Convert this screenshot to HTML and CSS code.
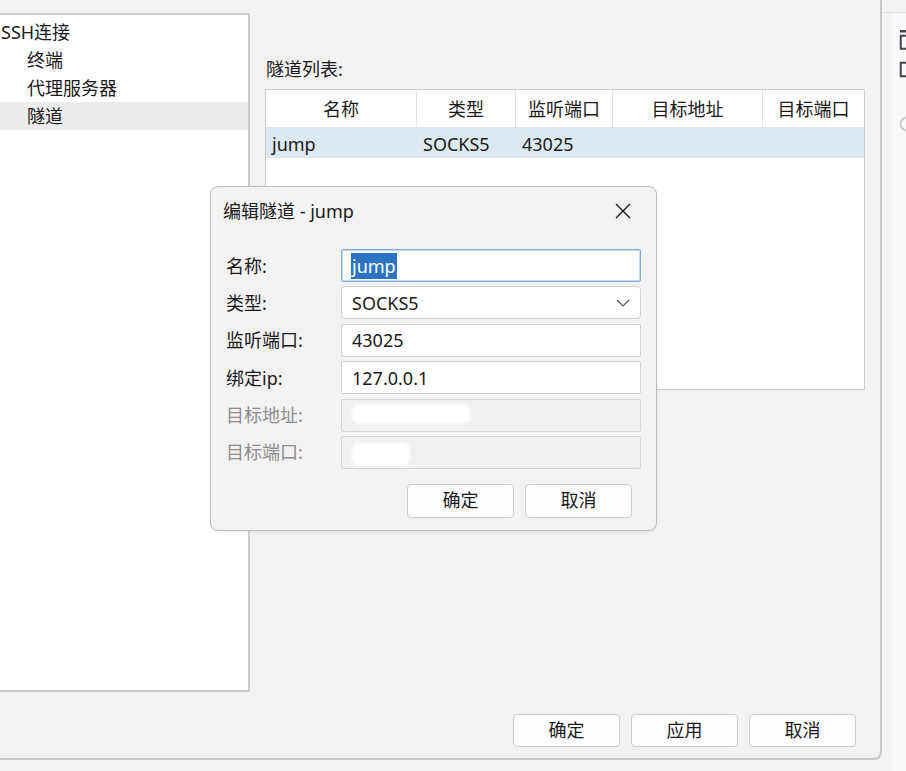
FILE: index.html
```html
<!DOCTYPE html>
<html lang="zh-CN">
<head>
<meta charset="utf-8">
<title>SSH连接 - 隧道</title>
<link rel="stylesheet" href="styles.css">
</head>
<body>
<div class="screen">
  <div class="window">
    <div class="main">
      <div class="tree">
        <div class="tree-item root">SSH连接</div>
        <div class="tree-item child">终端</div>
        <div class="tree-item child">代理服务器</div>
        <div class="tree-item child selected">隧道</div>
      </div>
      <div class="content">
        <div class="list-label">隧道列表:</div>
        <div class="table">
          <div class="thead">
            <div class="th">名称</div>
            <div class="th">类型</div>
            <div class="th">监听端口</div>
            <div class="th">目标地址</div>
            <div class="th last">目标端口</div>
          </div>
          <div class="trow selected">
            <div class="td">jump</div>
            <div class="td">SOCKS5</div>
            <div class="td">43025</div>
            <div class="td"></div>
            <div class="td"></div>
          </div>
        </div>
      </div>
    </div>
    <div class="footer">
      <button class="btn">确定</button>
      <button class="btn">应用</button>
      <button class="btn">取消</button>
    </div>

    <div class="dialog">
      <div class="dlg-title">
        <span class="dlg-title-text">编辑隧道 - jump</span>
        <span class="dlg-close">
          <svg width="16" height="16" viewBox="0 0 16 16"><path d="M1 1 L15 15 M15 1 L1 15" stroke="#1a1a1a" stroke-width="1.4" fill="none"/></svg>
        </span>
      </div>
      <div class="form">
        <div class="frow">
          <label class="flabel">名称:</label>
          <div class="field focused"><span class="sel">jump</span></div>
        </div>
        <div class="frow">
          <label class="flabel">类型:</label>
          <div class="field combo">
            <span>SOCKS5</span>
            <svg class="chev" width="14" height="8" viewBox="0 0 14 8"><path d="M1 1 L7 7 L13 1" stroke="#555" stroke-width="1.1" fill="none"/></svg>
          </div>
        </div>
        <div class="frow">
          <label class="flabel">监听端口:</label>
          <div class="field">43025</div>
        </div>
        <div class="frow">
          <label class="flabel">绑定ip:</label>
          <div class="field">127.0.0.1</div>
        </div>
        <div class="frow">
          <label class="flabel disabled">目标地址:</label>
          <div class="field off"><span class="blot blot-wide"></span></div>
        </div>
        <div class="frow">
          <label class="flabel disabled">目标端口:</label>
          <div class="field off"><span class="blot blot-short"></span></div>
        </div>
      </div>
      <div class="dlg-buttons">
        <button class="btn">确定</button>
        <button class="btn">取消</button>
      </div>
    </div>
  </div>

  <div class="side">
    <div class="side-panel">
      <div class="side-icons">
        <svg class="side-icon" width="16" height="21" viewBox="0 0 16 21"><rect x="1" y="1" width="14" height="2.5" fill="#45454f"/><rect x="1.75" y="6.75" width="12.5" height="13" fill="none" stroke="#45454f" stroke-width="2"/></svg>
        <svg class="side-icon" width="16" height="17" viewBox="0 0 16 17"><rect x="1.75" y="1.75" width="12.5" height="13.5" fill="none" stroke="#45454f" stroke-width="2"/></svg>
        <svg class="side-icon faint" width="16" height="16" viewBox="0 0 16 16"><circle cx="8" cy="8" r="6.5" fill="none" stroke="#cfcfcf" stroke-width="2.2"/></svg>
      </div>
    </div>
  </div>
</div>
</body>
</html>
```

FILE: styles.css
```css
* {
  box-sizing: border-box;
}

html, body {
  margin: 0;
  padding: 0;
}

body {
  background: #f3f3f3;
  font-family: "Noto Sans", "Noto Sans CJK SC", sans-serif;
  font-size: 18px;
  color: #1a1a1a;
  width: 906px;
  height: 771px;
  overflow: hidden;
}

.screen {
  display: flex;
  width: 906px;
  height: 771px;
}

/* main window */
.window {
  position: relative;
  width: 882px;
  height: 760px;
  flex: none;
  background: #f2f2f2;
  border-right: 2px solid #c6c6c6;
  border-bottom: 2px solid #c6c6c6;
  border-bottom-right-radius: 8px;
  display: flex;
  flex-direction: column;
}

.main {
  display: flex;
  height: 692px;
  flex: none;
}

/* tree */
.tree {
  width: 250px;
  height: 679px;
  margin-top: 13px;
  background: #fff;
  border-top: 2px solid #cdcdcd;
  border-right: 2px solid #cdcdcd;
  border-bottom: 2px solid #c8c8c8;
  padding-top: 3px;
}

.tree-item {
  height: 28px;
  line-height: 28px;
  white-space: nowrap;
}

.tree-item.root {
  padding-left: 1px;
}

.tree-item.child {
  padding-left: 27px;
}

.tree-item.selected {
  background: #ebebeb;
}

/* content */
.content {
  padding-left: 15px;
  padding-top: 56px;
}

.list-label {
  line-height: 26px;
  height: 26px;
  margin-bottom: 7px;
  padding-left: 1px;
}

.table {
  width: 600px;
  height: 301px;
  background: #fff;
  border: 1px solid #cbcbcb;
}

.thead,
.trow {
  display: grid;
  grid-template-columns: 151px 99px 97px 150px 1fr;
}

.thead {
  height: 38px;
  border-bottom: 1px solid #e3e3e3;
}

.th {
  text-align: center;
  line-height: 38px;
  border-right: 1px solid #e3e3e3;
  white-space: nowrap;
}

.th.last {
  border-right: none;
}

.trow {
  height: 30px;
}

.trow.selected {
  background: #dde8f1;
}

.td {
  line-height: 32px;
  padding-left: 6px;
  white-space: nowrap;
}

/* footer */
.footer {
  display: flex;
  justify-content: flex-end;
  gap: 11px;
  padding-top: 22px;
  padding-right: 24px;
}

.btn {
  width: 107px;
  height: 33px;
  padding: 0;
  background: #fdfdfd;
  border: 1px solid #cccccc;
  border-radius: 4px;
  font-family: inherit;
  font-size: 18px;
  color: #1a1a1a;
  line-height: 31px;
}

/* dialog */
.dialog {
  position: absolute;
  left: 210px;
  top: 186px;
  width: 447px;
  height: 345px;
  background: #f2f2f2;
  border: 1px solid #bdbdbd;
  border-radius: 8px;
  box-shadow: 0 1px 3px rgba(0, 0, 0, 0.08);
  display: flex;
  flex-direction: column;
}

.dlg-title {
  height: 48px;
  display: flex;
  align-items: center;
  justify-content: space-between;
  padding-left: 12px;
  padding-right: 25px;
  padding-bottom: 1px;
}

.dlg-title-text {
  line-height: 24px;
}

.dlg-close {
  display: flex;
  width: 16px;
  height: 16px;
}

.form {
  padding-top: 14px;
  padding-left: 15px;
  display: flex;
  flex-direction: column;
  gap: 4.4px;
}

.frow {
  display: flex;
  align-items: center;
  height: 33px;
}

.flabel {
  width: 115px;
  flex: none;
  line-height: 24px;
  white-space: nowrap;
}

.flabel.disabled {
  color: #8d8d8d;
}

.field {
  width: 300px;
  height: 33px;
  background: #fff;
  border: 1px solid #d0d0d0;
  border-radius: 2px;
  padding-left: 10px;
  display: flex;
  align-items: center;
  line-height: 24px;
  white-space: nowrap;
}

.field.focused {
  border: 1px solid #80a9d8;
  box-shadow: inset 0 0 0 1px #c4d8ee;
  padding-left: 9px;
}

.sel {
  background: #2c73c2;
  color: #fff;
  line-height: 26px;
  padding: 0 1px;
}

.field.combo {
  border-radius: 4px;
  justify-content: space-between;
  padding-right: 10px;
  border-color: #cfcfcf;
}

.chev {
  display: block;
}

.field.off {
  background: #f0f0f0;
  border-color: #d5d5d5;
}

.blot {
  display: block;
  background: #ffffff;
  border-radius: 6px;
  filter: blur(1.5px);
}

.blot-wide {
  width: 118px;
  height: 20px;
  margin-top: -2px;
}

.blot-short {
  width: 58px;
  height: 22px;
  margin-top: 4px;
}

.dlg-buttons {
  display: flex;
  justify-content: flex-end;
  gap: 11px;
  padding-top: 15px;
  padding-right: 24px;
}

.dlg-buttons .btn {
  height: 34px;
}

/* side strip */
.side {
  width: 24px;
  flex: none;
  padding-top: 12px;
  overflow: hidden;
}

.side-panel {
  width: 60px;
  height: 100%;
  border-top: 1px solid #e2e2e2;
  padding-left: 10px;
}

.side-icons {
  width: 50px;
  height: 100%;
  background: #f9f9f9;
  padding-left: 7px;
  padding-top: 16px;
  display: flex;
  flex-direction: column;
  align-items: flex-start;
  gap: 11px;
}

.side-icon {
  display: block;
  flex: none;
}

.side-icon.faint {
  margin-top: 27px;
}
```
